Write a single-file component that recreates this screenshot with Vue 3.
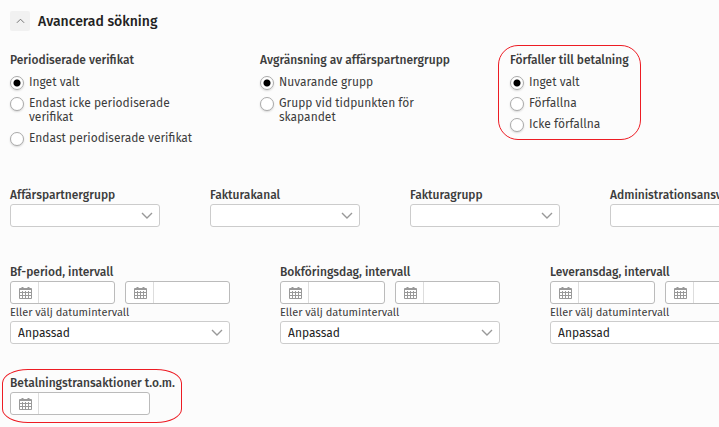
<template>
  <main class="search">
    <header class="search-header">
      <button type="button" class="toggle" aria-label="Avancerad sökning" aria-expanded="true">
        <svg viewBox="0 0 10 6" width="9" height="6"><path d="M1 5 L5 1 L9 5" /></svg>
      </button>
      <h1>Avancerad sökning</h1>
    </header>

    <form class="search-form" @submit.prevent>
      <div class="row radio-row">
        <fieldset
          v-for="group in radioGroups"
          :key="group.name"
          class="radio-group"
          :class="{ 'marked marked-group': group.marked }"
        >
          <legend>{{ group.label }}</legend>
          <label v-for="option in group.options" :key="option" class="radio">
            <input v-model="group.value" type="radio" :name="group.name" :value="option" />
            <span>{{ option }}</span>
          </label>
        </fieldset>
      </div>

      <div class="row select-row">
        <div v-for="field in selects" :key="field.id" class="field">
          <label :for="field.id" class="field-label">{{ field.label }}</label>
          <div class="select">
            <select :id="field.id"></select>
            <svg class="chevron" viewBox="0 0 12 8" width="12" height="8"><path d="M1 1 L6 6 L11 1" /></svg>
          </div>
        </div>
      </div>

      <div class="row interval-row">
        <div v-for="interval in intervals" :key="interval.id" class="interval">
          <label :for="interval.id + '-from'" class="field-label">{{ interval.label }}</label>
          <div class="dates">
            <div v-for="end in ['from', 'to']" :key="end" class="date">
              <span class="date-icon">
                <svg viewBox="0 0 13 12" width="13" height="12">
                  <path :d="calendar" />
                  <path class="rings" d="M3.5 0V3 M9.5 0V3" />
                </svg>
              </span>
              <input :id="interval.id + '-' + end" type="text" :aria-label="interval.label" />
            </div>
          </div>
          <label :for="interval.id + '-preset'" class="sub-label">Eller välj datumintervall</label>
          <div class="select">
            <select :id="interval.id + '-preset'">
              <option>Anpassad</option>
            </select>
            <svg class="chevron" viewBox="0 0 12 8" width="12" height="8"><path d="M1 1 L6 6 L11 1" /></svg>
          </div>
        </div>
      </div>

      <div class="row payment-row">
        <div class="payment marked marked-payment">
          <label for="payments-until" class="field-label">Betalningstransaktioner t.o.m.</label>
          <div class="date">
            <span class="date-icon">
              <svg viewBox="0 0 13 12" width="13" height="12">
                <path :d="calendar" />
                <path class="rings" d="M3.5 0V3 M9.5 0V3" />
              </svg>
            </span>
            <input id="payments-until" type="text" />
          </div>
        </div>
      </div>
    </form>
  </main>
</template>

<script setup>
import { ref } from 'vue'

const radioGroups = ref([
  {
    name: 'accrual',
    label: 'Periodiserade verifikat',
    value: 'Inget valt',
    options: ['Inget valt', 'Endast icke periodiserade verifikat', 'Endast periodiserade verifikat'],
  },
  {
    name: 'partner-scope',
    label: 'Avgränsning av affärspartnergrupp',
    value: 'Nuvarande grupp',
    options: ['Nuvarande grupp', 'Grupp vid tidpunkten för skapandet'],
  },
  {
    name: 'due',
    label: 'Förfaller till betalning',
    value: 'Inget valt',
    options: ['Inget valt', 'Förfallna', 'Icke förfallna'],
    marked: true,
  },
])

const selects = [
  { id: 'partner-group', label: 'Affärspartnergrupp' },
  { id: 'invoice-channel', label: 'Fakturakanal' },
  { id: 'invoice-group', label: 'Fakturagrupp' },
  { id: 'admin', label: 'Administrationsansvarig' },
]

const intervals = [
  { id: 'period', label: 'Bf-period, intervall' },
  { id: 'posting', label: 'Bokföringsdag, intervall' },
  { id: 'delivery', label: 'Leveransdag, intervall' },
]

// frame and day grid
const calendar =
  'M.5 1.5H12.5V11.5H.5Z M.5 2.5H12.5 M.5 5.5H12.5 M.5 8.5H12.5 M3.5 4V11.5 M6.5 4V11.5 M9.5 4V11.5'
</script>

<style>
body {
  background: #fcfcfc;
  overflow-x: hidden;
}
</style>

<style scoped>
.search {
  padding: 11px 10px;
  overflow: hidden;
  color: #3c3c3c;
  font-family: "Fira Sans", "Noto Sans", sans-serif;
  font-size: 12px;
  line-height: 14px;
}

.search-header {
  display: flex;
  align-items: flex-start;
  gap: 8px;
}

.toggle {
  display: flex;
  align-items: center;
  justify-content: center;
  width: 20px;
  height: 20px;
  padding: 0;
  border: 0;
  border-radius: 2px;
  background: #f1f1f1;
}

.toggle path,
.chevron path {
  fill: none;
  stroke: #666;
}

h1 {
  margin: 0;
  padding-top: 1px;
  color: #222;
  font-size: 14px;
  font-weight: 500;
  line-height: 20px;
}

.row {
  display: flex;
  gap: 50px;
}

.radio-row {
  min-height: 92px;
  margin-top: 21px;
}

.radio-group {
  display: flex;
  flex: 0 0 200px;
  flex-direction: column;
  gap: 7px;
  min-width: 0;
  margin: 0;
  padding: 0;
  border: 0;
}

legend {
  margin-bottom: 8px;
  padding: 0;
  font-weight: 500;
  white-space: nowrap;
}

.radio {
  display: flex;
  align-items: flex-start;
  gap: 5px;
}

.radio input {
  appearance: none;
  flex: none;
  width: 14px;
  height: 14px;
  margin: 1px 0 -1px;
  border: 1px solid #aaa;
  border-radius: 50%;
  background: #fff;
  box-shadow: 0 1px 2px rgba(0, 0, 0, 0.15);
}

.radio input:checked {
  background: radial-gradient(circle, #000 3px, #fff 4px);
}

.marked {
  position: relative;
}

.marked::after {
  content: "";
  position: absolute;
  border: 1px solid #ed1c24;
  pointer-events: none;
}

.marked-group {
  align-self: flex-start;
  flex-basis: 120px;
}

/* the fieldset's content box starts below its legend */
.marked-group::after {
  inset: -30px -11px -9px -12px;
  border-radius: 20px;
}

.marked-payment::after {
  inset: -7px -7px -8px -8px;
  border-radius: 26px / 14px;
}

.select-row {
  margin-top: 43px;
}

.field {
  flex: 0 0 150px;
}

.field-label {
  display: block;
  margin-bottom: 2px;
  font-weight: 500;
  white-space: nowrap;
}

.select {
  display: grid;
  align-items: center;
}

.select select,
.chevron {
  grid-area: 1 / 1;
}

.select select {
  appearance: none;
  width: 100%;
  height: 23px;
  padding: 0 28px 0 7px;
  border: 1px solid #ccc;
  border-radius: 3px;
  background: #fff;
  color: #222;
  font: inherit;
}

.chevron {
  justify-self: end;
  margin-right: 7px;
  pointer-events: none;
}

.chevron path {
  stroke: #999;
  stroke-width: 1.4;
}

.interval-row {
  margin-top: 38px;
}

.interval {
  flex: 0 0 220px;
  min-width: 0;
}

.dates {
  display: flex;
  gap: 10px;
}

.date {
  display: flex;
  flex: 1;
  min-width: 0;
  height: 23px;
  box-sizing: border-box;
  overflow: hidden;
  border: 1px solid #bbb;
  border-radius: 3px;
  background: #fff;
}

.date-icon {
  display: flex;
  flex: 0 0 28px;
  box-sizing: border-box;
  align-items: center;
  justify-content: center;
  padding-left: 2px;
  border-right: 1px solid #ddd;
}

.date-icon path {
  fill: none;
  stroke: #999;
}

.date-icon .rings {
  stroke-width: 2;
}

.date input {
  flex: 1;
  min-width: 0;
  padding: 0 6px;
  border: 0;
  background: none;
  font: inherit;
}

.sub-label {
  display: block;
  margin: 2px 0 1px;
  font-size: 11px;
}

.payment-row {
  margin-top: 32px;
}

.payment {
  width: 165px;
}

.payment .date {
  width: 140px;
}
</style>
